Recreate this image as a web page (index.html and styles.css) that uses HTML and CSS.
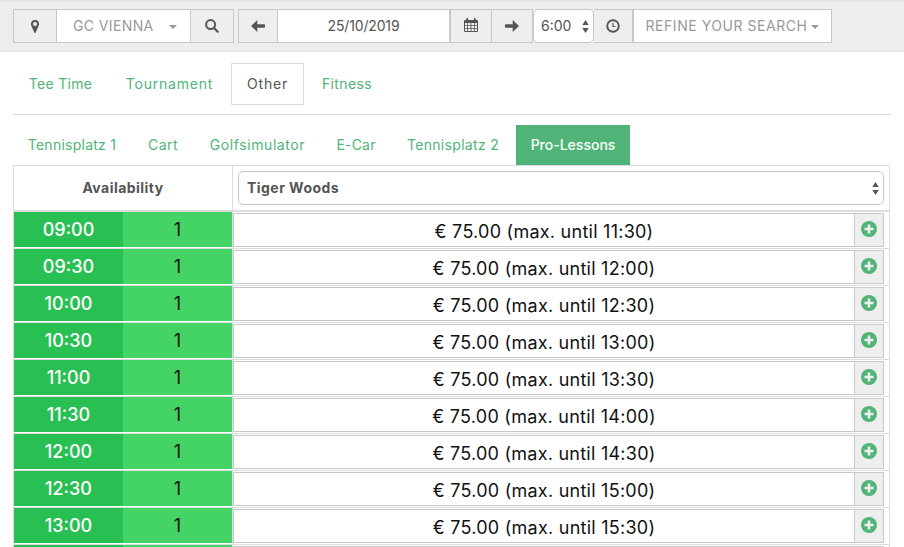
FILE: index.html
```html
<!DOCTYPE html>
<html lang="en">
<head>
<meta charset="utf-8">
<title>Bookings</title>
<link rel="stylesheet" href="styles.css">
</head>
<body>
<header class="toolbar">
  <div class="group club">
    <span class="addon pin"><svg width="8" height="13" viewBox="0 0 8 13"><path fill-rule="evenodd" d="M4 0a4 4 0 0 1 4 4c0 1.4-.5 2.2-1 3.300L4.700 12.500q-.7 1-1.400 0L1 7.300C.5 6.200 0 5.400 0 4a4 4 0 0 1 4-4zm0 2a2 2 0 1 0 0 4 2 2 0 0 0 0-4z"/></svg></span>
    <span class="field clubname"><span class="t-club">GC VIENNA</span><i class="caret"></i></span>
    <span class="addon search"><svg width="14" height="14" viewBox="0 0 14 14"><circle cx="5.600" cy="5.600" r="4.500" fill="none" stroke="#555" stroke-width="2"/><path d="M9 9l3.700 3.700" stroke="#555" stroke-width="2.200" stroke-linecap="round"/></svg></span>
  </div>
  <div class="group date">
    <span class="addon prev"><svg width="14" height="12" viewBox="0 0 14 12"><path d="M0 6L6.300 0v4.300H13q1 0 1 .8v1.800q0 .8-1 .8H6.300V12z"/></svg></span>
    <span class="field day"><span class="t-date">25/10/2019</span></span>
    <span class="addon cal"><svg width="14" height="14" viewBox="0 0 14 14"><path fill-rule="evenodd" d="M1 2h1.200V1q0-1 1-1t1 1v1h5.600V1q0-1 1-1t1 1v1H13q1 0 1 1v10q0 1-1 1H1q-1 0-1-1V3q0-1 1-1zM1 5v2.300h2.200V5zm3 0v2.300h2.600V5zm3.400 0v2.300H10V5zm3.400 0v2.300H13V5zM1 8v2.300h2.200V8zm3 0v2.300h2.600V8zm3.400 0v2.300H10V8zm3.400 0v2.300H13V8zM1 11v2h2.200v-2zm3 0v2h2.600v-2zm3.400 0v2H10v-2zm3.400 0v2H13v-2z"/></svg></span>
    <span class="addon next"><svg width="14" height="12" viewBox="0 0 14 12"><path d="M14 6L7.700 0v4.300H1q-1 0-1 .8v1.800q0 .8 1 .8h6.700V12z"/></svg></span>
  </div>
  <div class="time"><span class="t-hour">6:00</span><svg width="7" height="13" viewBox="0 0 7 13"><path d="M3.500 0L6.700 5H.3zM.3 8h6.400L3.500 13z"/></svg></div>
  <span class="addon clock"><svg width="14" height="14" viewBox="0 0 14 14"><circle cx="7" cy="7" r="5.800" fill="none" stroke="#555" stroke-width="1.900"/><path d="M7 3.700v3.800h2.400" fill="none" stroke="#555" stroke-width="1.100"/></svg></span>
  <div class="refine"><span class="t-refine">REFINE YOUR SEARCH</span><i class="caret"></i></div>
</header>
<nav class="tabs">
  <a class="tee">Tee Time</a><a class="tournament">Tournament</a><a class="other">Other</a><a class="fitness">Fitness</a>
</nav>
<nav class="subtabs">
  <a class="tp1">Tennisplatz 1</a><a class="cart">Cart</a><a class="golf">Golfsimulator</a><a class="ecar">E-Car</a><a class="tp2">Tennisplatz 2</a><a class="pro">Pro-Lessons</a>
</nav>
<main class="table">
  <div class="head">
    <div class="avail"><span>Availability</span></div>
    <div class="coach"><div class="select"><span>Tiger Woods</span><svg width="7" height="13" viewBox="0 0 7 13"><path d="M3.500 0L6.700 5H.3zM.3 8h6.400L3.500 13z"/></svg></div></div>
  </div>
  <div id="rows"></div>
  <div class="row last"><div class="hour"></div><div class="count"></div><div class="slot"><div class="price"></div><div class="add"></div></div></div>
</main>
<template id="row">
  <div class="row">
    <div class="hour"><span></span></div><div class="count">1</div>
    <div class="slot"><div class="price"><span></span></div><div class="add"><svg width="16" height="16" viewBox="0 0 16 16"><circle cx="8" cy="8" r="8"/><path d="M8 3.500v9M3.500 8h9" stroke="#eee" stroke-width="2.600"/></svg></div></div>
  </div>
</template>
<script src="rows.js"></script>
</body>
</html>
```
FILE: styles.css
```css
* { box-sizing: border-box; }
body {
  margin: 0;
  width: 904px;
  height: 547px;
  overflow: hidden;
  background: #fff;
  color: #555;
  font: 14px/20px Inter, "Open Sans", sans-serif;
}
svg { display: block; fill: #555; flex: none; }
span { white-space: nowrap; }

.toolbar {
  height: 52px;
  padding: 7px 0 0 13px;
  display: flex;
  align-items: flex-start;
  background: #ededed;
  border-top: 2px solid #e5e5e5;
  border-bottom: 1px solid #e1e1e1;
}
.group, .addon, .field, .time, .refine { height: 34px; display: flex; }
.addon, .field, .time, .refine { align-items: center; justify-content: center; }
.addon { background: #eee; border: 1px solid #c8c8c8; }
.field { background: #fff; border: solid #c8c8c8; border-width: 1px 0; }
.club { margin-right: 4px; }
.pin { width: 44px; }
.clubname { width: 133px; color: #999; justify-content: space-between; padding: 0 13px 0 16px; }
.t-club { letter-spacing: .38px; }
.search { width: 44px; }
.prev { width: 40px; }
.day { width: 171px; }
.t-date { letter-spacing: -.15px; }
.cal { width: 42px; border-left-width: 2px; border-right: 0; }
.cal svg { margin-top: -2px; }
.next { width: 42px; }
.time {
  width: 61px;
  background: #fff;
  border: 1px solid #c8c8c8;
  border-radius: 5px;
  justify-content: space-between;
  padding: 0 4px 0 7px;
}
.clock { width: 39px; border-left: 0; }
.refine { width: 199px; background: #fff; border: 1px solid #c8c8c8; color: #999; gap: 4px; }
.t-refine { letter-spacing: .54px; }
.caret { border: 4px solid transparent; border-top-color: #999; border-bottom: 0; margin-top: 2px; }

.tabs {
  margin: 0 13px;
  width: 878px;
  height: 63px;
  padding-top: 11px;
  border-bottom: 1px solid #ddd;
  display: flex;
  gap: 2px;
}
.tabs a, .subtabs a {
  display: flex;
  align-items: center;
  justify-content: center;
  white-space: nowrap;
  color: #50b478;
}
.tabs a { height: 42px; }
.tee { width: 95px; letter-spacing: .32px; }
.tournament { width: 119px; letter-spacing: .8px; }
.tabs .other { width: 73px; border: 1px solid #ddd; color: #555; letter-spacing: .8px; }
.fitness { width: 82px; letter-spacing: .4px; }

.subtabs { margin: 10px 0 0 13px; height: 40px; display: flex; gap: 2px; }
.tp1 { width: 118px; letter-spacing: .25px; }
.cart { width: 60px; letter-spacing: .4px; }
.golf { width: 125px; letter-spacing: .58px; }
.ecar { width: 68px; letter-spacing: .2px; }
.tp2 { width: 122px; letter-spacing: .32px; }
.subtabs .pro { width: 114px; background: #50b478; color: #fff; font-weight: 500; }

.table { margin-left: 13px; width: 877px; height: 382px; overflow: hidden; border: 1px solid #ddd; border-bottom: 0; }
.head { height: 46px; display: flex; border-bottom: 2px solid #ddd; font-weight: 700; letter-spacing: .46px; }
.avail { width: 219px; border-right: 1px solid #ddd; display: flex; align-items: center; justify-content: center; }
.coach { flex: 1; padding: 5px; }
.select {
  height: 34px;
  border: 1px solid #c8c8c8;
  border-radius: 5px;
  display: flex;
  align-items: center;
  justify-content: space-between;
  padding: 0 4px 0 8px;
}
.row { height: 37px; display: flex; border-bottom: 1px solid #ddd; font-size: 18px; line-height: 35px; text-align: center; }
.last { height: 2px; overflow: hidden; border-bottom: 0; }
.hour, .count { height: 35px; }
.hour { width: 109px; background: #29c053; color: #fff; font-weight: 500; }
.count { width: 109px; background: #44d466; color: #111; }
.slot { flex: 1; height: 36px; padding: 1px 5px 1px 0; border-left: 1px solid #ddd; display: flex; }
.price { flex: 1; height: 34px; border: 1px solid #c8c8c8; line-height: 36px; color: #111; letter-spacing: .25px; }
.add { width: 29px; height: 34px; background: #eee; border: 1px solid #c8c8c8; border-left: 0; display: flex; justify-content: center; padding-top: 7px; }
.add svg { fill: #50b478; }
```
FILE: rows.js
```js
const hours = ["09:00", "09:30", "10:00", "10:30", "11:00", "11:30", "12:00", "12:30", "13:00"];
const ends = ["11:30", "12:00", "12:30", "13:00", "13:30", "14:00", "14:30", "15:00", "15:30"];
const template = document.getElementById("row");
hours.forEach((hour, i) => {
  const row = template.content.cloneNode(true);
  row.querySelector(".hour span").textContent = hour;
  row.querySelector(".price span").textContent = `€ 75.00 (max. until ${ends[i]})`;
  document.getElementById("rows").append(row);
});
```
